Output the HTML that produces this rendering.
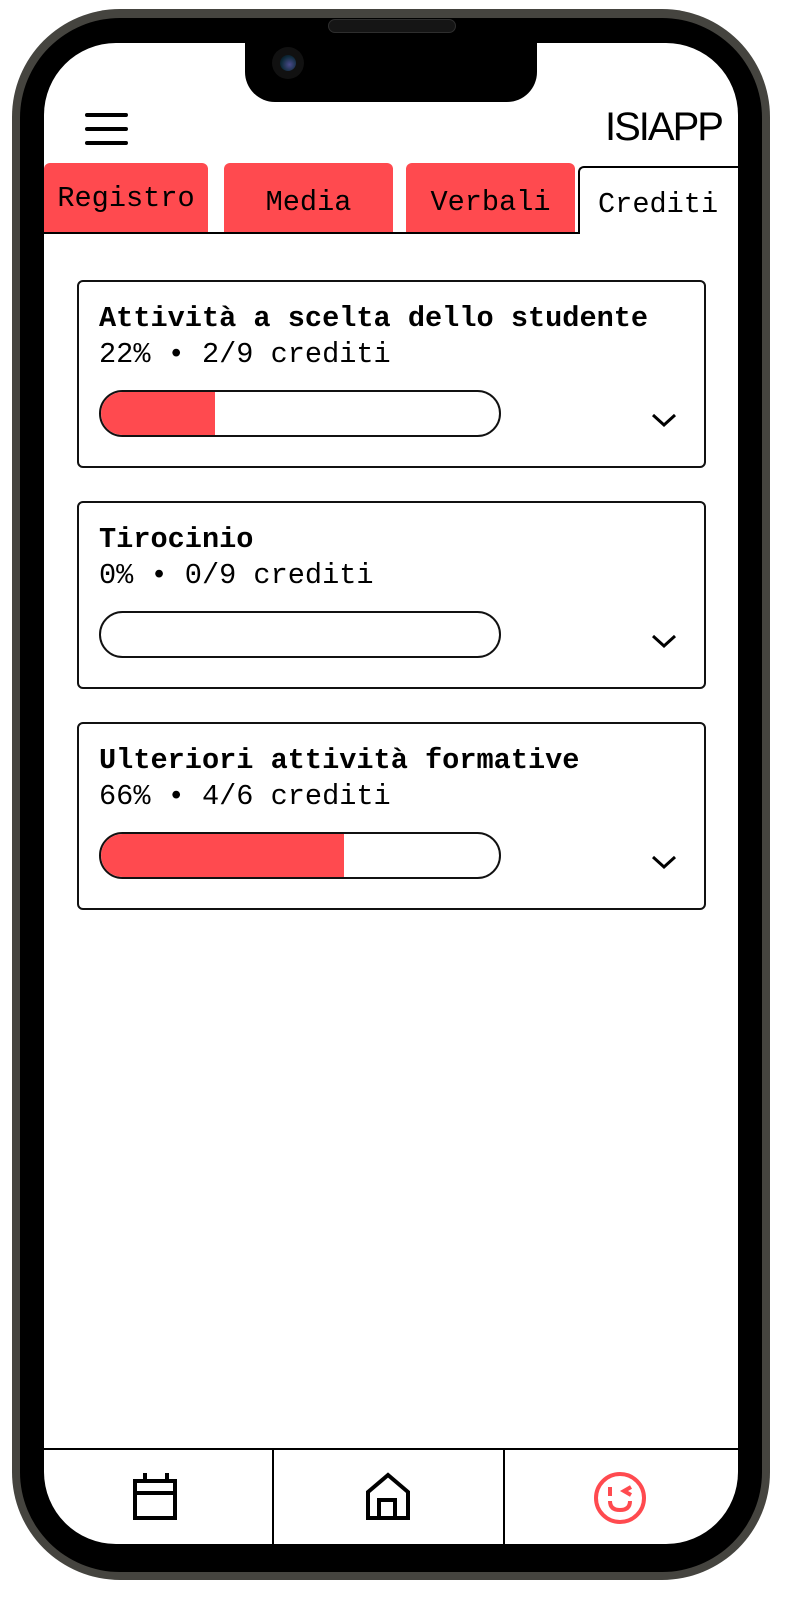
<!DOCTYPE html>
<html><head><meta charset="utf-8"><style>
*{margin:0;padding:0;box-sizing:border-box}
body{width:793px;height:1602px;background:#fff;position:relative;overflow:hidden;font-family:"Liberation Mono",monospace}
.abs{position:absolute}
#outer{left:12px;top:9px;width:758px;height:1571px;border-radius:108px;background:#45443f}
#black{left:20px;top:18px;width:742px;height:1554px;border-radius:100px;background:#000}
#screen{left:44px;top:43px;width:694px;height:1501px;border-radius:72px;background:#fff;overflow:hidden}
#notch{left:245px;top:30px;width:292px;height:72px;background:#000;border-radius:0 0 30px 30px}
.tab{position:absolute;top:120px;height:70px;background:#ff4a4f;border-radius:6px 6px 0 0;font-size:28.6px;text-align:center;line-height:80px;color:#000}
.card{position:absolute;left:33px;width:629px;height:188px;border:2px solid #111;border-radius:6px}
.t{position:absolute;left:20px;top:20px;font-size:28.6px;font-weight:bold;white-space:nowrap}
.s{position:absolute;left:20px;top:56px;font-size:28.6px;white-space:nowrap}
.bar{position:absolute;left:20px;top:108px;width:402px;height:47px;border:2px solid #111;border-radius:24px;overflow:hidden}
.fill{height:100%;background:#ff4a4f;border-right:0}
.chev{position:absolute;left:572px;top:130px}
</style></head><body>
<div class="abs" id="outer"></div>
<div class="abs" id="black"></div>
<div class="abs" id="screen">
  <div class="abs" style="left:41px;top:70px;width:43px;height:4px;background:#000;border-radius:2px"></div>
  <div class="abs" style="left:41px;top:84px;width:43px;height:4px;background:#000;border-radius:2px"></div>
  <div class="abs" style="left:41px;top:98px;width:43px;height:4px;background:#000;border-radius:2px"></div>
  <div class="abs" style="left:561px;top:62px;font-family:'Liberation Sans',sans-serif;font-size:40px;letter-spacing:-2px;color:#000">ISIAPP</div>
  <div class="tab" style="left:0;width:164px;line-height:72px">Registro</div>
  <div class="tab" style="left:180px;width:169px">Media</div>
  <div class="tab" style="left:362px;width:169px">Verbali</div>
  <div class="abs" style="left:0;top:189px;width:536px;height:2px;background:#000"></div>
  <div class="abs" style="left:534px;top:123px;width:170px;height:68px;border:2px solid #000;border-bottom:none;border-right:none;border-radius:6px 0 0 0;background:#fff;font-size:28.6px;line-height:74px;padding-left:18px">Crediti</div>
  <div class="card" style="top:237px">
    <div class="t">Attività a scelta dello studente</div>
    <div class="s">22% • 2/9 crediti</div>
    <div class="bar"><div class="fill" style="width:114px"></div></div>
    <svg class="chev" width="26" height="16" viewBox="0 0 26 16"><path d="M2 3 L13 13 L24 3" fill="none" stroke="#000" stroke-width="3"/></svg>
  </div>
  <div class="card" style="top:458px">
    <div class="t">Tirocinio</div>
    <div class="s">0% • 0/9 crediti</div>
    <div class="bar"></div>
    <svg class="chev" width="26" height="16" viewBox="0 0 26 16"><path d="M2 3 L13 13 L24 3" fill="none" stroke="#000" stroke-width="3"/></svg>
  </div>
  <div class="card" style="top:679px">
    <div class="t">Ulteriori attività formative</div>
    <div class="s">66% • 4/6 crediti</div>
    <div class="bar"><div class="fill" style="width:243px"></div></div>
    <svg class="chev" width="26" height="16" viewBox="0 0 26 16"><path d="M2 3 L13 13 L24 3" fill="none" stroke="#000" stroke-width="3"/></svg>
  </div>
  <div class="abs" style="left:0;top:1405px;width:694px;height:2px;background:#000"></div>
  <div class="abs" style="left:228px;top:1405px;width:2px;height:100px;background:#000"></div>
  <div class="abs" style="left:459px;top:1405px;width:2px;height:100px;background:#000"></div>
  <svg class="abs" style="left:88px;top:1429px" width="46" height="48" viewBox="0 0 46 48">
    <rect x="3" y="9" width="40" height="37" fill="none" stroke="#000" stroke-width="4"/>
    <line x1="3" y1="21" x2="43" y2="21" stroke="#000" stroke-width="4"/>
    <line x1="13" y1="1" x2="13" y2="9" stroke="#000" stroke-width="4"/>
    <line x1="35" y1="1" x2="35" y2="9" stroke="#000" stroke-width="4"/>
  </svg>
  <svg class="abs" style="left:320px;top:1429px" width="48" height="48" viewBox="0 0 48 48">
    <path d="M4 46 V20 L24 3 L44 20 V46 Z" fill="none" stroke="#000" stroke-width="4"/>
    <path d="M15 46 V28 H31 V46" fill="none" stroke="#000" stroke-width="4"/>
  </svg>
  <svg class="abs" style="left:548px;top:1427px" width="56" height="56" viewBox="0 0 56 56">
    <circle cx="28" cy="28" r="24" fill="none" stroke="#ff4a4f" stroke-width="4"/>
    <line x1="18" y1="17" x2="18" y2="26" stroke="#ff4a4f" stroke-width="4"/>
    <path d="M39 17 L32 21 L39 25" fill="none" stroke="#ff4a4f" stroke-width="4"/>
    <path d="M18 31 Q18 40 28 40 Q38 40 38 31" fill="none" stroke="#ff4a4f" stroke-width="4"/>
  </svg>
</div>
<div class="abs" id="notch"></div>
<div class="abs" style="left:328px;top:19px;width:128px;height:14px;border-radius:7px;background:#151515;border:1px solid #2e2e2e"></div>
<div class="abs" style="left:272px;top:47px;width:32px;height:32px;border-radius:50%;background:#111"></div>
<div class="abs" style="left:280px;top:55px;width:16px;height:16px;border-radius:50%;background:radial-gradient(circle at 60% 60%,#4a4a8a,#0e2a3a 60%,#050a10)"></div>
</body></html>
